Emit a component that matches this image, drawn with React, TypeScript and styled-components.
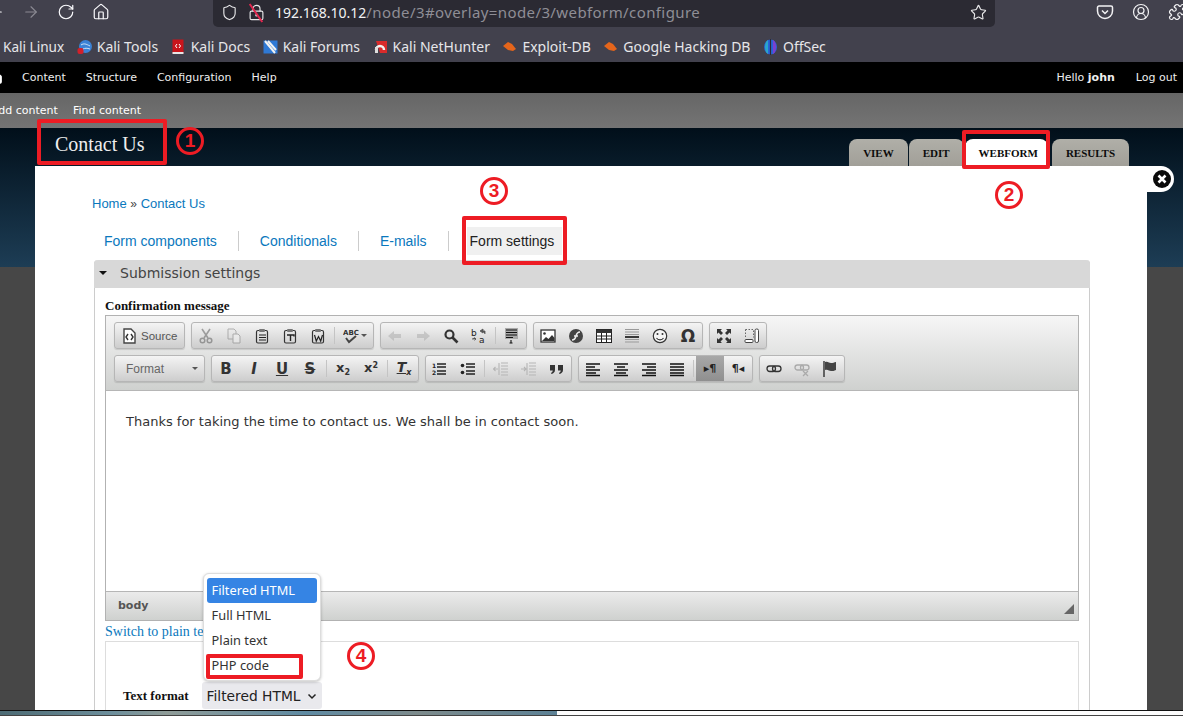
import React from "react";
import styled, { createGlobalStyle } from "styled-components";
import {
  ArrowLeft,
  ArrowRight,
  RotateCw,
  Home,
  Shield,
  LockKeyhole,
  Star,
  CircleUserRound,
  Puzzle,
} from "lucide-react";

const GlobalStyle = createGlobalStyle`
  html, body {
    margin: 0;
    padding: 0;
    overflow: hidden;
    background: #444;
  }
`;

type IconName =
  | "cut" | "copy" | "paste" | "pasteText" | "pasteWord" | "spell"
  | "undo" | "redo" | "find" | "replace" | "selectAll"
  | "image" | "flash" | "table" | "rule" | "smiley"
  | "maximize" | "blocks"
  | "ol" | "ul" | "outdent" | "indent" | "quote"
  | "left" | "center" | "right" | "justify"
  | "link" | "unlink" | "flag" | "source";

const EditorIcon: React.FC<{ name: IconName }> = ({ name }) => {
  const body = () => {
    switch (name) {
      case "source":
        return (
          <>
            <path d="M3 1h7l4 4v10H3z" fill="#fff" stroke="#444" strokeWidth="1.4" />
            <path d="M7 6 5 9l2 3M10 6l2 3-2 3" fill="none" stroke="#333" strokeWidth="1.4" />
          </>
        );
      case "cut":
        return (
          <>
            <path d="M4 1l6 9M12 1 6 10" stroke="#555" strokeWidth="1.6" fill="none" />
            <circle cx="4.5" cy="12.5" r="2.3" fill="none" stroke="#555" strokeWidth="1.5" />
            <circle cx="11.5" cy="12.5" r="2.3" fill="none" stroke="#555" strokeWidth="1.5" />
          </>
        );
      case "copy":
        return (
          <>
            <path d="M2 1h6l2 2v8H2z" fill="none" stroke="#777" />
            <path d="M7 6h5l2 2v7H7z" fill="#f3f3f3" stroke="#777" />
          </>
        );
      case "paste":
      case "pasteText":
      case "pasteWord":
        return (
          <>
            <rect x="2.5" y="2.5" width="11" height="12.5" rx="1.5" fill="none" stroke="#333" strokeWidth="1.2" />
            <rect x="5" y="1" width="6" height="3" rx="1" fill="#777" />
            {name === "paste" && <path d="M5 7h7M5 9.5h7M5 12h7" stroke="#222" strokeWidth="1.1" />}
            {name === "pasteText" && <path d="M5 7h7v1.5M8.500 7v6" stroke="#222" strokeWidth="1.4" fill="none" />}
            {name === "pasteWord" && <path d="M4.500 7l1.800 6L8.500 8.500 10.700 13l1.800-6" stroke="#222" strokeWidth="1.2" fill="none" />}
          </>
        );
      case "spell":
        return (
          <>
            <text x="0" y="7" fontFamily="DejaVu Sans, sans-serif" fontSize="7" fontWeight="700" fill="#333">ABC</text>
            <path d="M3 10l3 4 7-6" stroke="#444" strokeWidth="2" fill="none" />
          </>
        );
      case "undo":
        return <path d="M1 8l6-5v3h7v4H7v3z" fill="#aaa" />;
      case "redo":
        return <path d="M15 8 9 3v3H2v4h7v3z" fill="#aaa" />;
      case "find":
        return (
          <>
            <circle cx="6.500" cy="6.500" r="4" fill="none" stroke="#333" strokeWidth="2.2" />
            <path d="M9.500 9.500 14.500 14.500" stroke="#333" strokeWidth="2.6" />
          </>
        );
      case "replace":
        return (
          <>
            <text x="0" y="8" fontFamily="DejaVu Sans, sans-serif" fontSize="9" fill="#222">b</text>
            <text x="8" y="15" fontFamily="DejaVu Sans, sans-serif" fontSize="9" fill="#222">a</text>
            <path d="M9 3l3-2v4zM11 3h3v3M1 11h4l-1.500-1.500M5 11l-1.500 1.500" fill="#555" stroke="#555" strokeWidth=".8" />
          </>
        );
      case "selectAll":
        return (
          <>
            <rect x="1" y="0" width="13" height="11" fill="#aaa" />
            <path d="M2 2h11M2 4.500h11M2 7h11M2 9.500h7M7 12v3M5.500 15h3" stroke="#111" strokeWidth="1.100" />
          </>
        );
      case "image":
        return (
          <>
            <rect x="1" y="2" width="14" height="12" fill="#fff" stroke="#333" strokeWidth="1.300" />
            <circle cx="4.500" cy="5.500" r="1.300" fill="#333" />
            <path d="M2 13l4-4 2.500 2L12 7l2.500 3v3z" fill="#333" />
          </>
        );
      case "flash":
        return (
          <>
            <circle cx="8" cy="8" r="7" fill="#444" />
            <path d="M12 4c-3 0-3.500 2-4 4s-1 4-4 4M6 8h4" stroke="#eee" strokeWidth="1.500" fill="none" />
          </>
        );
      case "table":
        return (
          <>
            <rect x="0.500" y="1.500" width="15" height="13" fill="#fff" stroke="#222" />
            <rect x="0.500" y="1.500" width="15" height="3.500" fill="#333" />
            <path d="M5.500 5v9M10.500 5v9M1 8h14M1 11h14" stroke="#222" />
          </>
        );
      case "rule":
        return (
          <>
            <path d="M1 1.500h14M1 4h14M1 6.500h14M1 11.500h14M1 14h14" stroke="#999" />
            <path d="M1 9h14" stroke="#111" strokeWidth="1.600" />
          </>
        );
      case "smiley":
        return (
          <>
            <circle cx="8" cy="8" r="6.700" fill="#f5f5f5" stroke="#333" strokeWidth="1.200" />
            <circle cx="5.500" cy="6" r="1" fill="#333" />
            <circle cx="10.500" cy="6" r="1" fill="#333" />
            <path d="M4.500 10c1.500 2.500 5.500 2.500 7 0" fill="none" stroke="#333" strokeWidth="1.100" />
          </>
        );
      case "maximize":
        return <path d="M1 1h5L4.500 2.500 7 5 5 7 2.500 4.500 1 6zM15 1v5l-1.500-1.500L11 7 9 5l2.500-2.500L10 1zM1 15v-5l1.500 1.500L5 9l2 2-2.500 2.500L6 15zM15 15h-5l1.500-1.500L9 11l2-2 2.500 2.500L15 10z" fill="#333" />;
      case "blocks":
        return (
          <>
            <path d="M1.500 1.500h8v8" fill="none" stroke="#666" strokeDasharray="1.500 1.500" />
            <path d="M1.500 1.500v8" fill="none" stroke="#666" strokeDasharray="1.500 1.500" />
            <rect x="1" y="11.500" width="8" height="3" rx="1" fill="#fff" stroke="#444" />
            <rect x="11" y="1" width="3.500" height="13.500" rx="1.500" fill="#fff" stroke="#444" />
          </>
        );
      case "ol":
        return (
          <>
            <text x="0" y="7" fontFamily="DejaVu Sans, sans-serif" fontSize="6" fontWeight="700" fill="#222">1</text>
            <text x="0" y="14" fontFamily="DejaVu Sans, sans-serif" fontSize="6" fontWeight="700" fill="#222">2</text>
            <path d="M5 3h9M5 6h9M5 10h9M5 13h9" stroke="#222" strokeWidth="1.300" />
          </>
        );
      case "ul":
        return (
          <>
            <circle cx="2.500" cy="4.500" r="1.800" fill="#222" />
            <circle cx="2.500" cy="11.500" r="1.800" fill="#222" />
            <path d="M6 3h9M6 6h9M6 10h9M6 13h9" stroke="#222" strokeWidth="1.300" />
          </>
        );
      case "outdent":
        return <path d="M8 2h7M8 5h7M8 8h7M8 11h7M8 14h7M6 2v12M5 8H0M2.500 6 .5 8l2 2" stroke="#b5b5b5" strokeWidth="1.100" fill="none" />;
      case "indent":
        return <path d="M8 2h7M8 5h7M8 8h7M8 11h7M8 14h7M6 2v12M0 8h5M3 6l2 2-2 2" stroke="#b5b5b5" strokeWidth="1.100" fill="none" />;
      case "quote":
        return <path d="M1 4h5v5c0 2-1.500 3.500-3.500 4l-.5-1c1-.5 1.700-1.200 1.800-2.500H1zM9 4h5v5c0 2-1.500 3.500-3.500 4l-.5-1c1-.5 1.700-1.200 1.800-2.500H9z" fill="#333" />;
      case "left":
        return <path d="M1 3h14M1 6h9M1 9h14M1 12h10M1 14.500h14" stroke="#111" strokeWidth="1.400" />;
      case "center":
        return <path d="M1 3h14M4 6h8M1 9h14M3 12h10M1 14.500h14" stroke="#111" strokeWidth="1.400" />;
      case "right":
        return <path d="M1 3h14M6 6h9M1 9h14M5 12h10M1 14.500h14" stroke="#111" strokeWidth="1.400" />;
      case "justify":
        return <path d="M1 3h14M1 6h14M1 9h14M1 12h14M1 14.500h14" stroke="#111" strokeWidth="1.400" />;
      case "link":
        return (
          <>
            <rect x="1" y="5" width="8.500" height="5.500" rx="2.700" fill="none" stroke="#333" strokeWidth="1.300" />
            <rect x="6.500" y="5" width="8.500" height="5.500" rx="2.700" fill="none" stroke="#333" strokeWidth="1.300" />
          </>
        );
      case "unlink":
        return (
          <>
            <rect x="1" y="4" width="8.500" height="5" rx="2.500" fill="none" stroke="#aaa" strokeWidth="1.300" />
            <rect x="6.500" y="4" width="8.500" height="5" rx="2.500" fill="none" stroke="#aaa" strokeWidth="1.300" />
            <path d="M9 10l5 5M14 10l-5 5" stroke="#aaa" strokeWidth="1.300" />
          </>
        );
      case "flag":
        return (
          <>
            <path d="M2 0v16" stroke="#222" strokeWidth="1.300" />
            <path d="M3 1c3-1 4 1 6 1s3-.5 5-1v8c-2 1-3 1-5 1s-3-2-6-1z" fill="#444" />
          </>
        );
    }
  };
  return (
    <svg width="16" height="16" viewBox="0 0 16 16" aria-hidden>
      {body()}
    </svg>
  );
};

const Favicon: React.FC<{ kind: "tools" | "docs" | "forums" | "hunter" | "exploit" | "offsec" }> = ({ kind }) => (
  <svg width="15" height="16" viewBox="0 0 15 16" aria-hidden>
    {kind === "tools" && (
      <>
        <circle cx="8.500" cy="7.500" r="6.500" fill="#3b82d6" />
        <path d="M4 6c3-2 5-1 9 1M6 10c2-1 4-1 7 0" stroke="#cfe3f7" fill="none" />
        <rect x="0.500" y="9" width="6" height="6" rx="2" fill="#d3202a" />
      </>
    )}
    {kind === "docs" && (
      <>
        <rect x="1.500" y="0.500" width="11" height="14" fill="#c9151b" />
        <path d="M1.500 13h11v2h-11z" fill="#e6e6e6" />
        <path d="M6 5 4.500 7 6 9M8 5l1.500 2L8 9" stroke="#fff" fill="none" />
      </>
    )}
    {kind === "forums" && (
      <>
        <rect x="0.500" y="1.500" width="14" height="13" fill="#2f79d5" />
        <path d="M2 2l10 12M5 2l8 9" stroke="#f2f2f2" strokeWidth="2" />
      </>
    )}
    {kind === "hunter" && (
      <>
        <path d="M3 2h11v12H7z" fill="#d92b2b" />
        <path d="M3 11a4 4 0 0 1 8 0" fill="none" stroke="#f2f2f2" strokeWidth="2.500" />
        <path d="M2 8h3v6H2z" fill="#ddd" />
      </>
    )}
    {kind === "exploit" && <path d="M1 7l5-4 4 2 4 5-3 2-5-1z" fill="#e5651b" />}
    {kind === "offsec" && (
      <>
        <ellipse cx="7.500" cy="8" rx="6.500" ry="7.500" fill="#2a63d8" />
        <path d="M2 8c0-3 1-6 3-7v14C3 14 2 11 2 8z" fill="#2aa6c9" />
        <path d="M13 8c0-3-1-6-3-7v14c2-1 3-4 3-7z" fill="#7c3fd0" />
        <path d="M7.500 0v16" stroke="#2b2a33" strokeWidth="1.200" />
      </>
    )}
  </svg>
);

type ToolItem =
  | { icon: IconName; off?: boolean }
  | { glyph: React.ReactNode; on?: boolean }
  | { sep: true };

const bookmarks = [
  { label: "Kali Tools", icon: "tools" },
  { label: "Kali Docs", icon: "docs" },
  { label: "Kali Forums", icon: "forums" },
  { label: "Kali NetHunter", icon: "hunter" },
  { label: "Exploit-DB", icon: "exploit" },
  { label: "Google Hacking DB", icon: "exploit" },
  { label: "OffSec", icon: "offsec" },
] as const;

const Screen = styled.div`
  position: relative;
  display: flex;
  flex-direction: column;
  width: 1183px;
  height: 716px;
  overflow: hidden;
  font-family: "Liberation Sans", Arial, sans-serif;
`;

const BrowserBar = styled.div`
  display: flex;
  flex: none;
  height: 30px;
  background: #42414d;
`;

const NavIcons = styled.div`
  display: flex;
  flex: none;
  align-items: center;
  gap: 17px;
  box-sizing: border-box;
  width: 226px;
  height: 24px;
  margin-left: -13px;
`;

const UrlField = styled.div`
  display: flex;
  flex: none;
  align-items: center;
  gap: 10px;
  box-sizing: border-box;
  width: 782px;
  height: 27px;
  padding: 0 8px 3px 8px;
  background: #2b2a33;
  border-radius: 0 0 5px 5px;
`;

const LockWrap = styled.span`
  position: relative;
  display: inline-flex;
`;

const LockSlash = styled.span`
  position: absolute;
  left: 7px;
  top: -2px;
  width: 2px;
  height: 22px;
  background: #e22850;
  transform: rotate(-35deg);
`;

const UrlText = styled.span`
  flex: 1;
  color: #8f8e96;
  font: 15px/20px "Noto Sans", sans-serif;
  letter-spacing: 0.4px;
  white-space: nowrap;
`;

const UrlHost = styled.span`
  color: #f2f2f4;
  font-size: 14px;
  letter-spacing: 0;
`;

const BrowserActions = styled.div`
  display: flex;
  flex: none;
  align-items: center;
  gap: 18px;
  height: 24px;
  padding-left: 101px;
`;

const BookmarkBar = styled.div`
  display: flex;
  flex: none;
  align-items: center;
  gap: 12.500px;
  box-sizing: border-box;
  height: 32px;
  padding: 1px 0 0 3px;
  background: #42414d;
  color: #e6e6e9;
  font: 14px/18px "Noto Sans", sans-serif;
  white-space: nowrap;
`;

const FirstBookmark = styled.span`
  font-size: 13.600px;
`;

const Bookmark = styled.span`
  display: inline-flex;
  align-items: center;
  gap: 5px;
`;

const AdminBar = styled.div`
  display: flex;
  flex: none;
  align-items: center;
  box-sizing: border-box;
  height: 31px;
  padding-top: 1px;
  background: #000;
  color: #eee;
  font: 11px/14px "DejaVu Sans", sans-serif;
`;

const AdminHome = styled.span`
  display: inline-flex;
  margin-left: -11px;
  margin-right: 19px;
`;

const AdminLink = styled.span`
  margin-right: 20px;
`;

const AdminUser = styled.div`
  display: flex;
  gap: 21px;
  margin-left: auto;
  padding-right: 6px;

  strong {
    font-weight: 700;
  }
`;

const ShortcutBar = styled.div`
  display: flex;
  flex: none;
  align-items: flex-end;
  gap: 15px;
  box-sizing: border-box;
  height: 35px;
  margin-left: -9px;
  padding-bottom: 10px;
  background: linear-gradient(#666, #747474);
  color: #fff;
  font: 11px/14px "DejaVu Sans", sans-serif;
`;

const ShortcutLink = styled.span``;

const Stage = styled.div`
  flex: none;
  height: 582px;
  overflow: hidden;
  background:
    linear-gradient(#010f1a, #1d3d55) no-repeat 0 0 / 100% 139px,
    #474747;
`;

const OverlayHead = styled.div`
  display: flex;
  justify-content: space-between;
  align-items: flex-end;
  height: 38px;
  padding: 0 54px 0 55px;
`;

const PageTitle = styled.h1`
  align-self: center;
  margin: 0;
  padding-bottom: 6px;
  color: #eee;
  font: 400 20px/26px "Liberation Serif", serif;
`;

const PrimaryTabs = styled.div`
  display: flex;
  gap: 1px;
`;

const PrimaryTab = styled.span<{ $active?: boolean }>`
  display: flex;
  align-items: center;
  height: 27px;
  padding: ${({ $active }) => ($active ? "0 10px 0 14px" : "0 14px")};
  margin-right: ${({ $active }) => ($active ? "3px" : "0")};
  border-radius: 8px 8px 0 0;
  background: ${({ $active }) => ($active ? "#fff" : "linear-gradient(#b0afa8, #a19f98)")};
  color: #0c0c0c;
  font: 700 11px/14px "Liberation Serif", serif;
  text-transform: uppercase;
`;

const Panel = styled.div`
  position: relative;
  box-sizing: border-box;
  width: 1112px;
  height: 560px;
  margin-left: 35px;
  padding: 30px 57px 0 57px;
  background: #fff;
`;

const CloseTab = styled.div`
  position: absolute;
  top: 0;
  left: 100%;
  display: flex;
  align-items: center;
  justify-content: center;
  box-sizing: border-box;
  width: 27px;
  height: 26px;
  padding-left: 2px;
  border-radius: 0 13px 13px 0;
  background: #fff;
`;

const Breadcrumb = styled.div`
  height: 16px;
  color: #0a78bd;
  font: 13px/16px "Liberation Sans", sans-serif;

  a {
    color: #0a78bd;
  }
`;

const Chevrons = styled.span`
  color: #444;
  font-size: 12px;
`;

const SecondaryTabs = styled.div`
  display: flex;
  align-items: center;
  height: 26px;
  margin: 16px 0 6px 2px;
`;

const SecondaryTab = styled.span<{ $active?: boolean }>`
  display: flex;
  align-items: center;
  height: ${({ $active }) => ($active ? "28px" : "20px")};
  padding: ${({ $active }) => ($active ? "0 8px 0 3px" : "0 21px 0 10px")};
  margin-left: ${({ $active }) => ($active ? "7px" : "0")};
  margin-right: ${({ $active }) => ($active ? "0" : "11px")};
  border-right: ${({ $active }) => ($active ? "0" : "1px solid #ccc")};
  background: ${({ $active }) => ($active ? "#f0f0f0" : "transparent")};
  color: ${({ $active }) => ($active ? "#222" : "#0a78bd")};
  font: 14px/18px "Liberation Sans", sans-serif;
  white-space: nowrap;
`;

const Fieldset = styled.div`
  box-sizing: border-box;
  width: 996px;
  height: 460px;
  margin-left: 2px;
  border: 1px solid #ccc;
  border-top: 0;
  border-bottom: 0;
  border-radius: 4px 4px 0 0;
`;

const LegendBar = styled.div`
  display: flex;
  align-items: center;
  box-sizing: border-box;
  height: 28px;
  margin: 0 -1px;
  padding: 0 0 2px 5px;
  border-radius: 4px 4px 0 0;
  background: #d8d8d8;
  color: #444;
  font: 14px/18px "DejaVu Sans", sans-serif;
`;

const LegendArrow = styled.span`
  width: 0;
  height: 0;
  margin-right: 13px;
  border: 4px solid transparent;
  border-top: 4px solid #111;
  border-bottom: 0;
`;

const FieldsetBody = styled.div`
  padding: 10px 10px 0 10px;
`;

const FieldLabel = styled.div`
  height: 17px;
  color: #111;
  font: 700 13px/15px "Liberation Serif", serif;
`;

const Editor = styled.div`
  box-sizing: border-box;
  width: 974px;
  border: 1px solid #b2b2b2;
`;

const EditorToolbar = styled.div`
  display: flex;
  flex-direction: column;
  gap: 6px;
  box-sizing: border-box;
  height: 75px;
  padding: 6px 8px 0 8px;
  border-bottom: 1px solid #b6b6b6;
  background: linear-gradient(#f6f6f6, #cfd1cf);
`;

const ToolRow = styled.div`
  display: flex;
  gap: 6px;
  height: 27px;
`;

const chip = `
  box-sizing: border-box;
  height: 27px;
  border: 1px solid #b6b6b6;
  border-radius: 3px;
  background: linear-gradient(#f4f4f4, #cdcdcd);
  box-shadow: 0 1px 1px rgba(0, 0, 0, 0.12);
`;

const SourceButton = styled.div`
  ${chip}
  display: flex;
  align-items: center;
  gap: 4px;
  width: 71px;
  padding-left: 6px;
  color: #555;
  font: 11.500px/16px "Liberation Sans", sans-serif;
`;

const FormatCombo = styled.div`
  ${chip}
  display: flex;
  align-items: center;
  justify-content: space-between;
  width: 91px;
  padding: 0 6px 0 11px;
  color: #666;
  font: 12px/16px "Liberation Sans", sans-serif;
`;

const ToolGroup = styled.div`
  ${chip}
  display: flex;
`;

const ToolButton = styled.span<{ $off?: boolean; $on?: boolean }>`
  display: flex;
  align-items: center;
  justify-content: center;
  width: 28px;
  height: 25px;
  opacity: ${({ $off }) => ($off ? 0.5 : 1)};
  background: ${({ $on }) => ($on ? "linear-gradient(#a8a8a8, #8f8f8f)" : "transparent")};
`;

const SpellButton = styled.span`
  display: flex;
  align-items: center;
  gap: 2px;
  box-sizing: border-box;
  width: 36px;
  height: 25px;
  padding-left: 6px;
`;

const ToolSep = styled.span`
  width: 3px;
  margin: 4px 0 4px 2px;
  border-left: 1px solid #c4c4c4;
  box-sizing: border-box;
`;

const Caret = styled.span`
  width: 0;
  height: 0;
  border: 3px solid transparent;
  border-top: 3px solid #555;
  border-bottom: 0;
`;

const Bold = styled.span`
  color: #333;
  font: 700 15px/16px "DejaVu Sans", sans-serif;
`;

const Italic = styled(Bold)`
  font-style: italic;
`;

const Under = styled(Bold)`
  text-decoration: underline;
`;

const Strike = styled(Bold)`
  text-decoration: line-through;
`;

const Script = styled.span`
  color: #333;
  font: 700 13px/16px "DejaVu Sans", sans-serif;
`;

const Sub = styled.span`
  position: relative;
  top: 3px;
  font-size: 8px;
`;

const Sup = styled.span`
  position: relative;
  top: -4px;
  font-size: 8px;
`;

const RemoveFormat = styled(Script)`
  font-style: italic;
  font-size: 14px;
  text-decoration: underline;
`;

const Omega = styled.span`
  color: #333;
  font: 700 17px/16px "DejaVu Sans", sans-serif;
`;

const Pilcrow = styled.span`
  color: #222;
  font: 700 11px/16px "DejaVu Sans", sans-serif;
  white-space: nowrap;
`;

const EditorBody = styled.div`
  box-sizing: border-box;
  height: 200px;
  padding: 22px 20px;
  background: #fff;
  color: #333;
  font: 13px/17px "DejaVu Sans", sans-serif;
`;

const EditorFooter = styled.div`
  position: relative;
  box-sizing: border-box;
  height: 29px;
  padding: 7px 12px;
  border-top: 1px solid #b6b6b6;
  background: linear-gradient(#ebebeb, #cfd1cf);
  color: #555;
  font: 700 11px/14px "DejaVu Sans", sans-serif;
`;

const Resizer = styled.span`
  position: absolute;
  right: 4px;
  bottom: 6px;
  width: 0;
  height: 0;
  border-left: 10px solid transparent;
  border-bottom: 10px solid #666;
`;

const SwitchLink = styled.a`
  display: block;
  box-sizing: border-box;
  height: 20px;
  padding-top: 3px;
  color: #0a78bd;
  font: 14px/16px "Liberation Serif", serif;
`;

const FormatFieldset = styled.div`
  display: flex;
  align-items: center;
  gap: 13px;
  box-sizing: border-box;
  width: 974px;
  height: 90px;
  padding: 18px 0 0 17px;
  border: 1px solid #ddd;
  border-bottom: 0;
`;

const FormatLabel = styled.span`
  color: #111;
  font: 700 13px/16px "Liberation Serif", serif;
`;

const SelectWrap = styled.div`
  position: relative;
`;

const FakeSelect = styled.div`
  display: flex;
  align-items: center;
  justify-content: space-between;
  box-sizing: border-box;
  width: 120px;
  height: 27px;
  padding: 0 5px;
  border-radius: 3px;
  background: #e9e9ed;
  color: #222;
  font: 13.800px/18px "DejaVu Sans", sans-serif;
`;

const Dropdown = styled.div`
  position: absolute;
  left: 1px;
  bottom: 28px;
  box-sizing: border-box;
  width: 118px;
  height: 108px;
  padding: 4px 3px;
  border: 1px solid #ddd;
  border-radius: 6px;
  background: #fff;
  box-shadow: 0 1px 3px rgba(0, 0, 0, 0.25);
`;

const DropdownItem = styled.div<{ $selected?: boolean }>`
  box-sizing: border-box;
  height: 25px;
  padding: 0 5px;
  border-radius: 3px;
  background: ${({ $selected }) => ($selected ? "#3584e4" : "transparent")};
  color: ${({ $selected }) => ($selected ? "#fff" : "#333")};
  font: 12.800px/25px "Noto Sans", sans-serif;
`;

const DesktopStrip = styled.div`
  flex: none;
  height: 4px;
  border-top: 1px solid #111;
  background: #fcfcfc;
`;

const Wallpaper = styled.div`
  width: 557px;
  height: 100%;
  background: linear-gradient(90deg, #4d6b74, #6d8f9c 20%, #8f9c98 30%, #5f8ba3 55%, #7d8b8c 75%, #5d8296);
`;

const RedBox = styled.div<{ $x: number; $y: number; $w: number; $h: number }>`
  position: absolute;
  left: ${({ $x }) => $x}px;
  top: ${({ $y }) => $y}px;
  box-sizing: border-box;
  width: ${({ $w }) => $w}px;
  height: ${({ $h }) => $h}px;
  border: 4px solid #ed1c24;
  border-radius: 2px;
`;

const Marker = styled.div<{ $x: number; $y: number }>`
  position: absolute;
  left: ${({ $x }) => $x}px;
  top: ${({ $y }) => $y}px;
  display: flex;
  align-items: center;
  justify-content: center;
  box-sizing: border-box;
  width: 28px;
  height: 28px;
  border: 3px solid #ed1c24;
  border-radius: 50%;
  color: #ed1c24;
  font: 700 19px/20px "Liberation Sans", sans-serif;
`;

const row1: ToolItem[][] = [
  [
    { icon: "cut", off: true },
    { icon: "copy", off: true },
    { icon: "paste" },
    { icon: "pasteText" },
    { icon: "pasteWord" },
    { sep: true },
  ],
  [
    { icon: "undo", off: true },
    { icon: "redo", off: true },
    { icon: "find" },
    { icon: "replace" },
    { sep: true },
    { icon: "selectAll" },
  ],
  [
    { icon: "image" },
    { icon: "flash" },
    { icon: "table" },
    { icon: "rule" },
    { icon: "smiley" },
    { glyph: <Omega>Ω</Omega> },
  ],
  [{ icon: "maximize" }, { icon: "blocks" }],
];

const row2: ToolItem[][] = [
  [
    { glyph: <Bold>B</Bold> },
    { glyph: <Italic>I</Italic> },
    { glyph: <Under>U</Under> },
    { glyph: <Strike>S</Strike> },
    { sep: true },
    { glyph: <Script>x<Sub>2</Sub></Script> },
    { glyph: <Script>x<Sup>2</Sup></Script> },
    { sep: true },
    { glyph: <RemoveFormat>T<Sub>x</Sub></RemoveFormat> },
  ],
  [
    { icon: "ol" },
    { icon: "ul" },
    { sep: true },
    { icon: "outdent" },
    { icon: "indent" },
    { icon: "quote" },
  ],
  [
    { icon: "left" },
    { icon: "center" },
    { icon: "right" },
    { icon: "justify" },
    { sep: true },
    { glyph: <Pilcrow>▸¶</Pilcrow>, on: true },
    { glyph: <Pilcrow>¶◂</Pilcrow> },
  ],
  [{ icon: "link" }, { icon: "unlink" }, { icon: "flag" }],
];

const renderGroup = (items: ToolItem[], key: number, tail?: React.ReactNode) => (
  <ToolGroup key={key}>
    {items.map((item, i) => {
      if ("sep" in item) return <ToolSep key={i} />;
      if ("glyph" in item) return <ToolButton key={i} $on={item.on}>{item.glyph}</ToolButton>;
      return (
        <ToolButton key={i} $off={item.off}>
          <EditorIcon name={item.icon} />
        </ToolButton>
      );
    })}
    {tail}
  </ToolGroup>
);

export default function App() {
  return (
    <Screen>
      <GlobalStyle />
      <BrowserBar>
        <NavIcons>
          <ArrowLeft size={18} color="#fbfbfe" strokeWidth={1.5} />
          <ArrowRight size={18} color="#8b8a93" strokeWidth={1.5} />
          <RotateCw size={18} color="#fbfbfe" strokeWidth={1.6} />
          <Home size={18} color="#fbfbfe" strokeWidth={1.6} />
        </NavIcons>
        <UrlField>
          <Shield size={17} color="#e8e8ea" strokeWidth={1.6} />
          <LockWrap>
            <LockKeyhole size={17} color="#e8e8ea" strokeWidth={1.6} />
            <LockSlash />
          </LockWrap>
          <UrlText>
            <UrlHost>192.168.10.12</UrlHost>/node/3#overlay=node/3/webform/configure
          </UrlText>
          <Star size={17} color="#e8e8ea" strokeWidth={1.6} />
        </UrlField>
        <BrowserActions>
          <svg width="18" height="18" viewBox="0 0 18 18" aria-hidden>
            <path d="M3 3h12a1.500 1.500 0 0 1 1.500 1.500V8a7.500 7.500 0 0 1-15 0V4.500A1.500 1.500 0 0 1 3 3z" fill="none" stroke="#f2f2f4" strokeWidth="1.500" />
            <path d="M6 7.500l3 3 3-3" fill="none" stroke="#f2f2f4" strokeWidth="1.500" />
          </svg>
          <CircleUserRound size={18} color="#f2f2f4" strokeWidth={1.6} />
          <Puzzle size={18} color="#f2f2f4" strokeWidth={1.6} />
        </BrowserActions>
      </BrowserBar>

      <BookmarkBar>
        <FirstBookmark>Kali Linux</FirstBookmark>
        {bookmarks.map((b) => (
          <Bookmark key={b.label}>
            <Favicon kind={b.icon} />
            {b.label}
          </Bookmark>
        ))}
      </BookmarkBar>

      <AdminBar>
        <AdminHome>
          <Home size={14} color="#fff" fill="#fff" />
        </AdminHome>
        <AdminLink>Content</AdminLink>
        <AdminLink>Structure</AdminLink>
        <AdminLink>Configuration</AdminLink>
        <AdminLink>Help</AdminLink>
        <AdminUser>
          <span>
            Hello <strong>john</strong>
          </span>
          <span>Log out</span>
        </AdminUser>
      </AdminBar>

      <ShortcutBar>
        <ShortcutLink>Add content</ShortcutLink>
        <ShortcutLink>Find content</ShortcutLink>
      </ShortcutBar>

      <Stage>
        <OverlayHead>
          <PageTitle>Contact Us</PageTitle>
          <PrimaryTabs>
            <PrimaryTab>View</PrimaryTab>
            <PrimaryTab>Edit</PrimaryTab>
            <PrimaryTab $active>Webform</PrimaryTab>
            <PrimaryTab>Results</PrimaryTab>
          </PrimaryTabs>
        </OverlayHead>

        <Panel>
          <CloseTab>
            <svg width="20" height="20" viewBox="0 0 20 20" aria-hidden>
              <circle cx="10" cy="10" r="9" fill="#0a0a0a" />
              <path d="M6.500 6.500l7 7M13.500 6.500l-7 7" stroke="#fff" strokeWidth="2.600" />
            </svg>
          </CloseTab>

          <Breadcrumb>
            <a>Home</a> <Chevrons>»</Chevrons> <a>Contact Us</a>
          </Breadcrumb>

          <SecondaryTabs>
            <SecondaryTab>Form components</SecondaryTab>
            <SecondaryTab>Conditionals</SecondaryTab>
            <SecondaryTab>E-mails</SecondaryTab>
            <SecondaryTab $active>Form settings</SecondaryTab>
          </SecondaryTabs>

          <Fieldset>
            <LegendBar>
              <LegendArrow />
              Submission settings
            </LegendBar>
            <FieldsetBody>
              <FieldLabel>Confirmation message</FieldLabel>
              <Editor>
                <EditorToolbar>
                  <ToolRow>
                    <SourceButton>
                      <EditorIcon name="source" />
                      Source
                    </SourceButton>
                    {row1.map((g, i) =>
                      renderGroup(
                        g,
                        i,
                        i === 0 ? (
                          <SpellButton>
                            <EditorIcon name="spell" />
                            <Caret />
                          </SpellButton>
                        ) : undefined,
                      ),
                    )}
                  </ToolRow>
                  <ToolRow>
                    <FormatCombo>
                      Format
                      <Caret />
                    </FormatCombo>
                    {row2.map((g, i) => renderGroup(g, i))}
                  </ToolRow>
                </EditorToolbar>
                <EditorBody>Thanks for taking the time to contact us. We shall be in contact soon.</EditorBody>
                <EditorFooter>
                  body
                  <Resizer />
                </EditorFooter>
              </Editor>
              <SwitchLink>Switch to plain text</SwitchLink>
              <FormatFieldset>
                <FormatLabel>Text format</FormatLabel>
                <SelectWrap>
                  <Dropdown>
                    <DropdownItem $selected>Filtered HTML</DropdownItem>
                    <DropdownItem>Full HTML</DropdownItem>
                    <DropdownItem>Plain text</DropdownItem>
                    <DropdownItem>PHP code</DropdownItem>
                  </Dropdown>
                  <FakeSelect>
                    Filtered HTML
                    <svg width="10" height="10" viewBox="0 0 10 10" aria-hidden>
                      <path d="M1.500 3.500 5 7l3.500-3.500" fill="none" stroke="#222" strokeWidth="1.500" />
                    </svg>
                  </FakeSelect>
                </SelectWrap>
              </FormatFieldset>
            </FieldsetBody>
          </Fieldset>
        </Panel>
      </Stage>

      <DesktopStrip>
        <Wallpaper />
      </DesktopStrip>

      <RedBox $x={37} $y={119} $w={130} $h={46} />
      <RedBox $x={962} $y={130} $w={88} $h={39} />
      <RedBox $x={462} $y={216} $w={105} $h={49} />
      <RedBox $x={206} $y={654} $w={97} $h={25} />
      <Marker $x={176} $y={127}>1</Marker>
      <Marker $x={995} $y={181}>2</Marker>
      <Marker $x={480} $y={177}>3</Marker>
      <Marker $x={347} $y={642}>4</Marker>
    </Screen>
  );
}
